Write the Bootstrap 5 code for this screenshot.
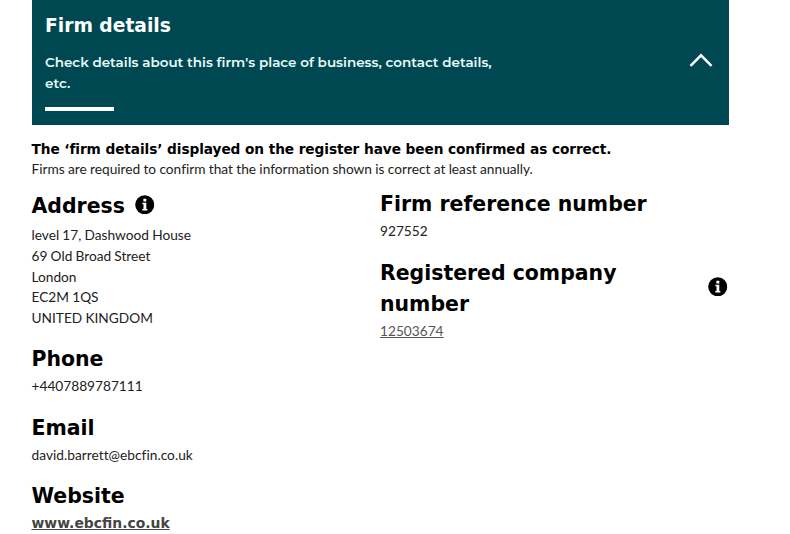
<!DOCTYPE html>
<html lang="en">
<head>
<meta charset="utf-8">
<meta name="viewport" content="width=device-width, initial-scale=1">
<title>Firm details</title>
<link href="https://cdn.jsdelivr.net/npm/bootstrap@5.3.0/dist/css/bootstrap.min.css" rel="stylesheet">
<style>
body{font:400 13.7px/20.55px Lato,sans-serif;color:#222;background:#fff;overflow:hidden}
.firm-page{width:697px;margin-left:31.5px}
.firm-panel{background:#004851;height:124.5px;padding:12px 16px 0 13.5px}
.firm-title,.firm-heading,.firm-notice,.firm-site{font-family:"DejaVu Sans",Verdana,sans-serif;font-weight:700}
.firm-title{font-size:18.7px;line-height:28px;color:#fff}
.firm-intro{font:600 13.5px/20.6px Montserrat,Inter,sans-serif;width:470px;margin-top:12px;color:#e9fbfb}
.firm-rule{width:69px;height:3.5px;margin-top:14px;background:#fff}
.firm-chevron{margin-top:41px}
.firm-notice{font-size:13.7px;letter-spacing:-.08px;line-height:20px;color:#000;margin-top:14px}
.firm-note{word-spacing:-.18px;font-variant-ligatures:none}
.firm-heading{font-size:20.45px;line-height:31px;color:#000;margin-bottom:1px}
.firm-heading-address{margin-bottom:3.8px;gap:10.5px}
.firm-address{line-height:inherit;word-spacing:-.3px}
.firm-col{width:348.5px}
.firm-left{padding-top:11.6px}
.firm-right{padding-top:10px}
.firm-item{margin-bottom:16px}
.firm-info{margin-bottom:3px}
.firm-col:last-child .firm-info{margin-bottom:5px;margin-right:1px}
.firm-email{font-variant-ligatures:none;letter-spacing:.03px}
.firm-link,.firm-link:hover{color:#555}
.firm-site,.firm-site:hover{font-size:13.9px;color:#444}
</style>
</head>
<body>
<svg class="d-none" aria-hidden="true">
<symbol id="info" viewBox="0 0 20 20"><circle cx="10" cy="10" r="9.8"/><path fill="#fff" d="M8.600 3.800h3v2.800h-3zM7.600 8h4v6.300h1.100v1.600H7.500v-1.600h1.200V9.600H7.600z"/></symbol>
</svg>
<main class="firm-page">
<header class="firm-panel d-flex justify-content-between align-items-start">
<div>
<h1 class="firm-title mb-0">Firm details</h1>
<p class="firm-intro mb-0">Check details about this firm's place of business, contact details, etc.</p>
<div class="firm-rule"></div>
</div>
<svg class="firm-chevron" width="24" height="15" viewBox="0 0 24 15" fill="none" stroke="#fff" stroke-width="2.5"><path d="M1.500 12.800 12 2.300 22.500 12.800"/></svg>
</header>
<p class="firm-notice mb-0">The ‘firm details’ displayed on the register have been confirmed as correct.</p>
<p class="firm-note mb-0">Firms are required to confirm that the information shown is correct at least annually.</p>
<div class="d-flex">
<section class="firm-col firm-left">
<div class="firm-item">
<h2 class="firm-heading firm-heading-address d-flex align-items-center">Address <svg class="firm-info" width="19.500" height="19.500"><use href="#info"/></svg></h2>
<address class="firm-address mb-0">level 17, Dashwood House<br>69 Old Broad Street<br>London<br>EC2M 1QS<br>UNITED KINGDOM</address>
</div>
<div class="firm-item"><h2 class="firm-heading">Phone</h2><div>+4407889787111</div></div>
<div class="firm-item"><h2 class="firm-heading">Email</h2><div class="firm-email">david.barrett@ebcfin.co.uk</div></div>
<div><h2 class="firm-heading">Website</h2><a class="firm-site" href="#">www.ebcfin.co.uk</a></div>
</section>
<section class="firm-col firm-right">
<div class="firm-item"><h2 class="firm-heading">Firm reference number</h2><div>927552</div></div>
<div>
<div class="d-flex justify-content-between align-items-center">
<h2 class="firm-heading">Registered company<br>number</h2>
<svg class="firm-info" width="19.500" height="19.500"><use href="#info"/></svg>
</div>
<a class="firm-link" href="#">12503674</a>
</div>
</section>
</div>
</main>
<script src="https://cdn.jsdelivr.net/npm/bootstrap@5.3.0/dist/js/bootstrap.bundle.min.js"></script>
</body>
</html>
